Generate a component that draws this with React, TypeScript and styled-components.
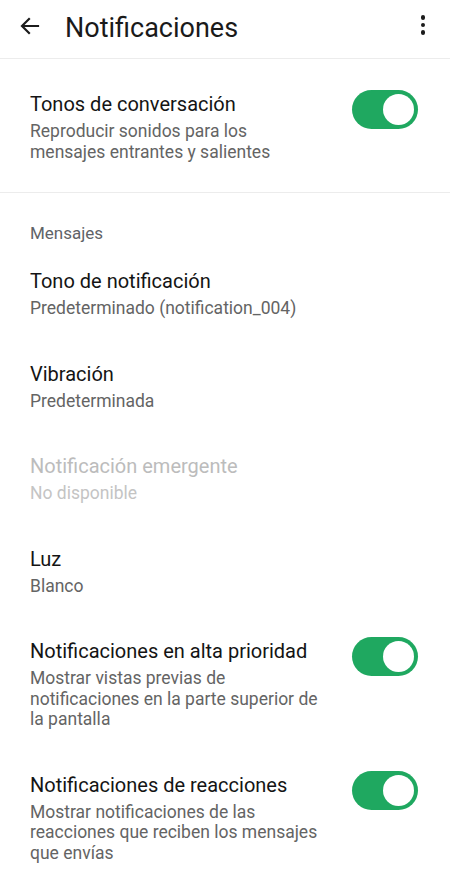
import React from "react";
import styled, { createGlobalStyle } from "styled-components";

type Setting = {
  title: string;
  subtitle: string;
  toggle?: boolean;
  disabled?: boolean;
};

const messageSettings: Setting[] = [
  { title: "Tono de notificación", subtitle: "Predeterminado (notification_004)" },
  { title: "Vibración", subtitle: "Predeterminada" },
  { title: "Notificación emergente", subtitle: "No disponible", disabled: true },
  { title: "Luz", subtitle: "Blanco" },
  {
    title: "Notificaciones en alta prioridad",
    subtitle:
      "Mostrar vistas previas de notificaciones en la parte superior de la pantalla",
    toggle: true,
  },
  {
    title: "Notificaciones de reacciones",
    subtitle: "Mostrar notificaciones de las reacciones que reciben los mensajes que envías",
    toggle: true,
  },
];

const GlobalStyle = createGlobalStyle`
  body {
    margin: 0;
    background: #ffffff;
    font-family: Roboto, "Noto Sans", sans-serif;
  }
`;

const App = () => {
  const [toggles, setToggles] = React.useState<Record<string, boolean>>({
    "Tonos de conversación": true,
    "Notificaciones en alta prioridad": true,
    "Notificaciones de reacciones": true,
  });

  const flip = (key: string) => {
    setToggles({ ...toggles, [key]: !toggles[key] });
  };

  return (
    <Screen>
      <GlobalStyle />
      <TopBar>
        <IconButton aria-label="Atrás">
          <svg width="24" height="24" viewBox="0 0 24 24">
            <path
              d="M20 12H4.5M11 5l-7 7 7 7"
              fill="none"
              stroke="#1c1c1c"
              strokeWidth="2.2"
              strokeLinecap="square"
            />
          </svg>
        </IconButton>
        <Title>Notificaciones</Title>
        <MenuButton aria-label="Más opciones">
          <Dot />
          <Dot />
          <Dot />
        </MenuButton>
      </TopBar>

      <Section $spaced>
        <Row onClick={() => flip("Tonos de conversación")}>
          <TextBlock>
            <ItemTitle>Tonos de conversación</ItemTitle>
            <ItemSub>Reproducir sonidos para los mensajes entrantes y salientes</ItemSub>
          </TextBlock>
          <Switch $on={toggles["Tonos de conversación"]} />
        </Row>
      </Section>

      <Section>
        <SectionLabel>Mensajes</SectionLabel>
        {messageSettings.map((item) => (
          <Row
            key={item.title}
            onClick={() => item.toggle && flip(item.title)}
          >
            <TextBlock>
              <ItemTitle $disabled={item.disabled}>{item.title}</ItemTitle>
              <ItemSub $disabled={item.disabled}>{item.subtitle}</ItemSub>
            </TextBlock>
            {item.toggle && <Switch $on={toggles[item.title]} />}
          </Row>
        ))}
      </Section>
    </Screen>
  );
};

const Screen = styled.div`
  width: 450px;
  min-height: 876px;
  background: #ffffff;
  overflow: hidden;
`;

const TopBar = styled.header`
  height: 58px;
  display: flex;
  align-items: center;
  border-bottom: 1px solid #ececec;
  padding: 0 14px 0 18px;
`;

const IconButton = styled.div`
  width: 24px;
  height: 24px;
  display: flex;
  margin-top: -6px;
`;

const Title = styled.h1`
  flex: 1;
  margin: -3px 0 0 23px;
  font-size: 27px;
  font-weight: 400;
  color: #1a1a1a;
`;

const MenuButton = styled.div`
  display: flex;
  flex-direction: column;
  gap: 3px;
  margin: -8px 11px 0 0;
`;

const Dot = styled.span`
  width: 4.5px;
  height: 4.5px;
  border-radius: 50%;
  background: #1c1c1c;
`;

const Section = styled.section<{ $spaced?: boolean }>`
  padding: ${(p) => (p.$spaced ? "11px 0 9px" : "30px 0 0")};
  border-bottom: ${(p) => (p.$spaced ? "1px solid #ececec" : "none")};
`;

const SectionLabel = styled.div`
  padding: 0 30px;
  font-size: 17px;
  line-height: 20px;
  font-weight: 400;
  color: #5f6368;
  margin-bottom: 4px;
`;

const Row = styled.div`
  display: flex;
  align-items: flex-start;
  padding: 21px 32px 21px 30px;
  cursor: pointer;
`;

const TextBlock = styled.div`
  flex: 1;
  max-width: 288px;
  margin-right: auto;
`;

const ItemTitle = styled.div<{ $disabled?: boolean }>`
  font-size: 20px;
  line-height: 26px;
  color: ${(p) => (p.$disabled ? "#bcbcbc" : "#141414")};
`;

const ItemSub = styled.div<{ $disabled?: boolean }>`
  margin-top: 4px;
  font-size: 17.5px;
  line-height: 20.5px;
  color: ${(p) => (p.$disabled ? "#c4c4c4" : "#646464")};
`;

const Switch = styled.div<{ $on?: boolean }>`
  position: relative;
  flex-shrink: 0;
  width: 66px;
  height: 39px;
  margin-top: -1px;
  border-radius: 20px;
  background: ${(p) => (p.$on ? "#1fa860" : "#bdbdbd")};

  &::after {
    content: "";
    position: absolute;
    top: 4px;
    left: ${(p) => (p.$on ? "31px" : "4px")};
    width: 31px;
    height: 31px;
    border-radius: 50%;
    background: #ffffff;
  }
`;

export default App;
